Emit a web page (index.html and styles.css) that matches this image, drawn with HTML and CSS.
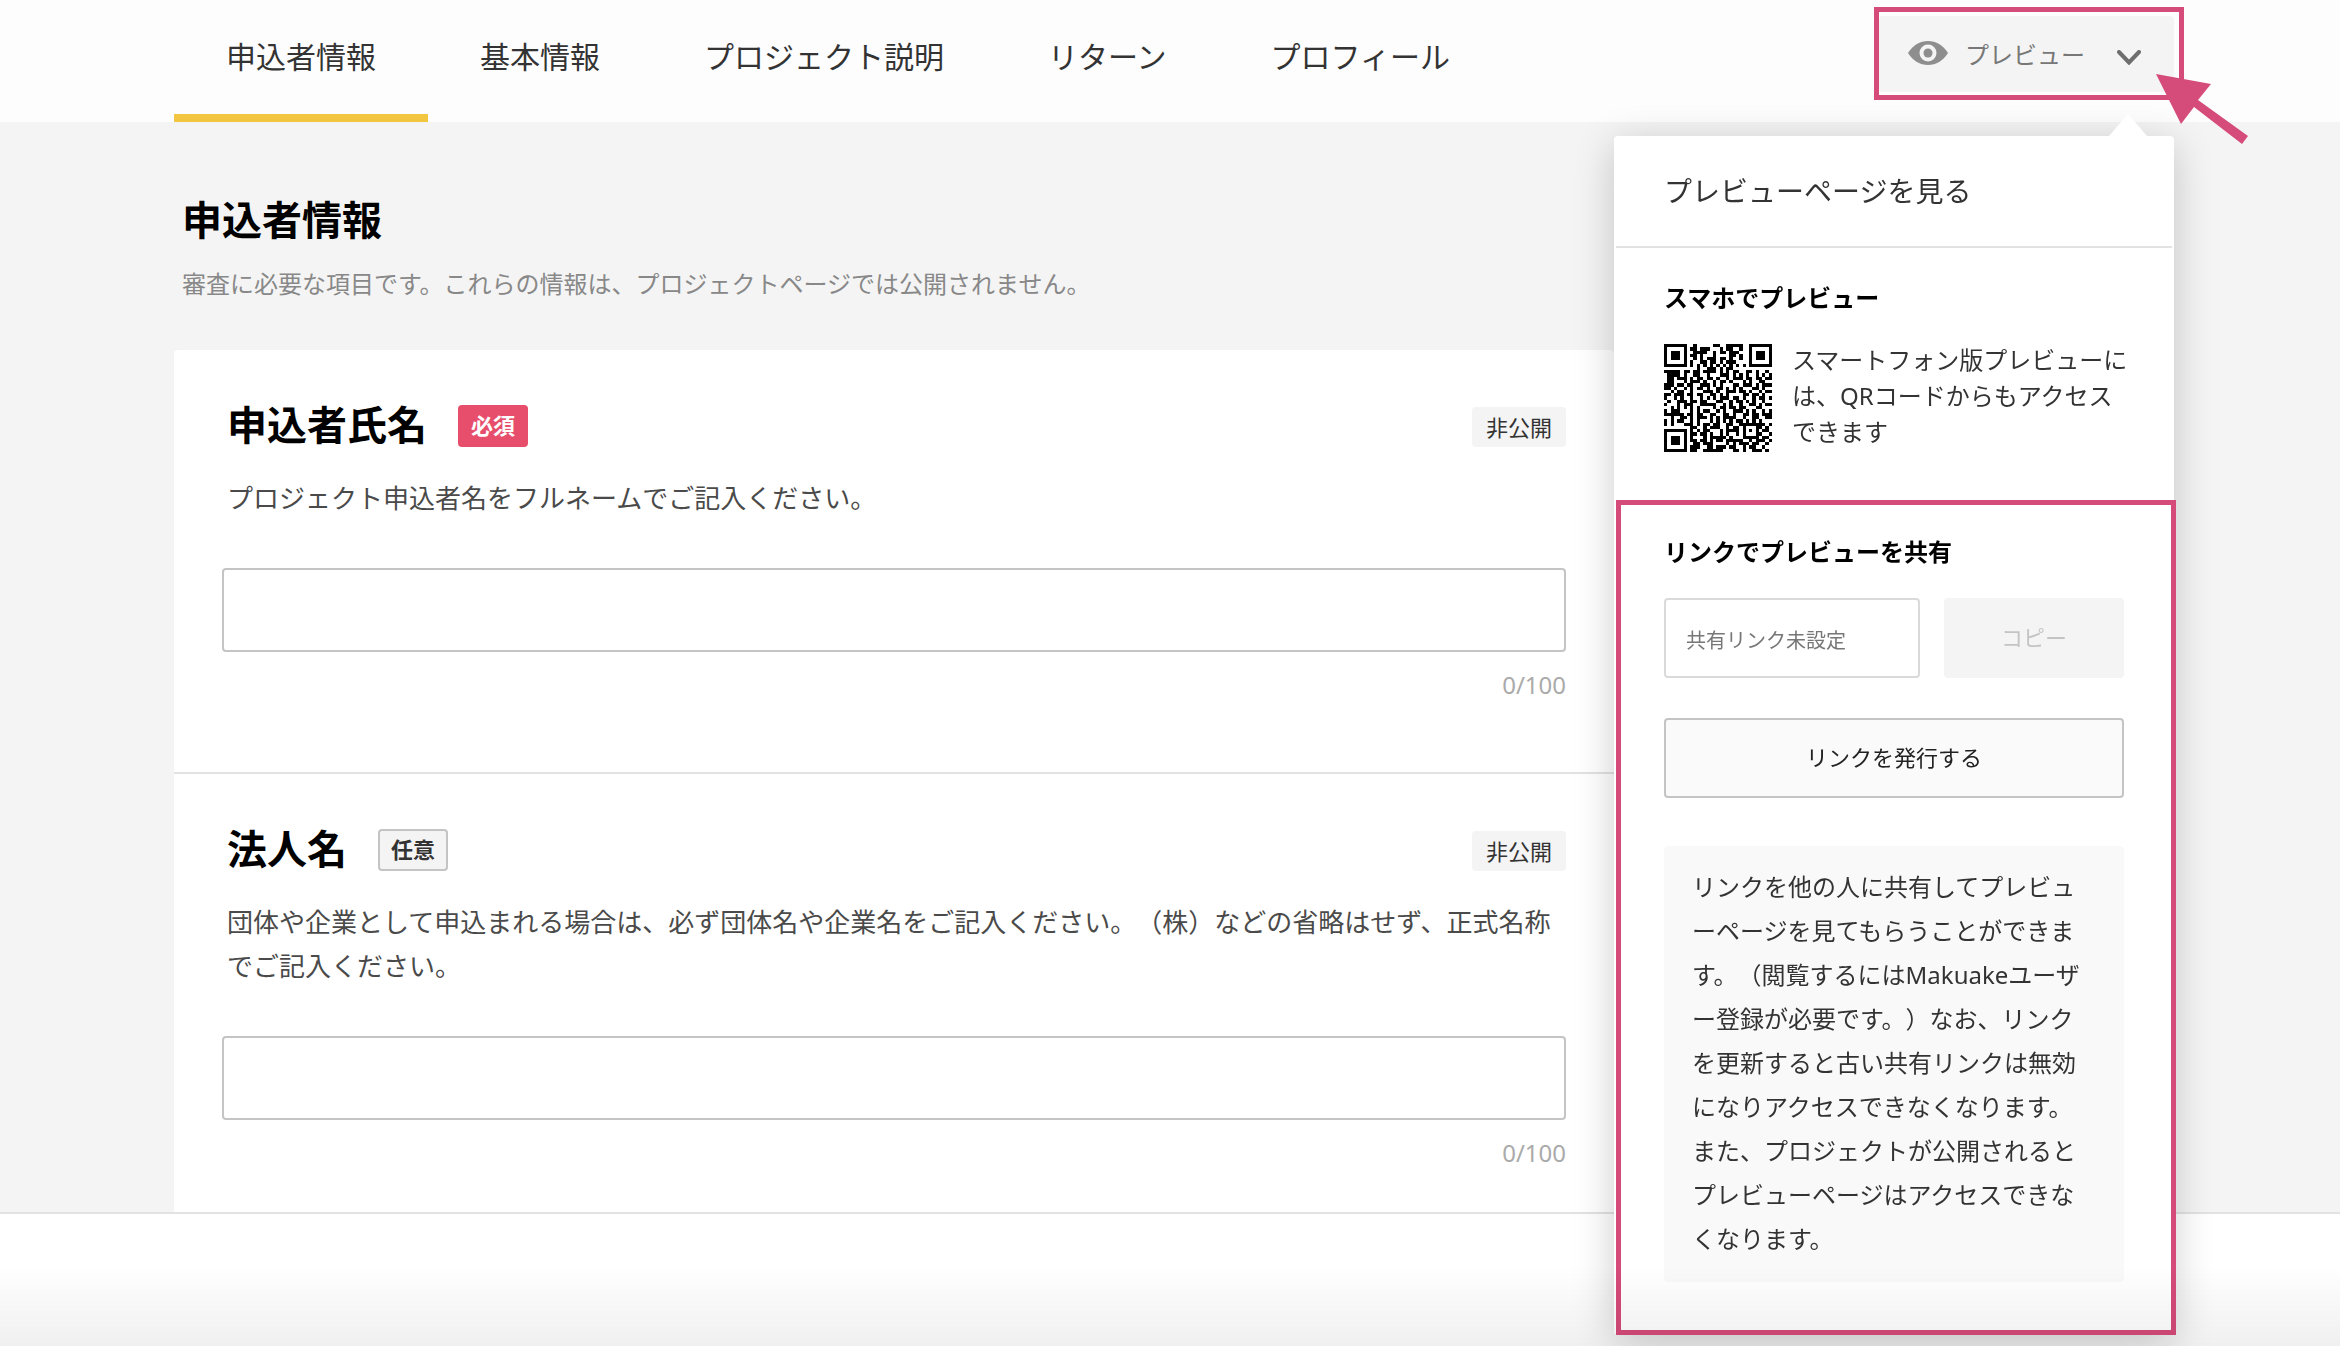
FILE: index.html
```html
<!DOCTYPE html>
<html lang="ja">
<head>
  <meta charset="utf-8">
  <meta name="viewport" content="width=device-width, initial-scale=1">
  <title>申込者情報</title>
  <link rel="stylesheet" href="styles.css">
</head>
<body>
  <header class="header">
    <nav class="tabs">
      <a class="tab tab-active" href="#applicant">申込者情報</a>
      <a class="tab" href="#basic">基本情報</a>
      <a class="tab" href="#project">プロジェクト説明</a>
      <a class="tab" href="#returns">リターン</a>
      <a class="tab" href="#profile">プロフィール</a>
    </nav>
    <div class="preview">
      <button class="preview-button" type="button" aria-expanded="true">
        <svg class="icon-eye" viewBox="0 0 40 24" aria-hidden="true">
          <path d="M0 12C5 4 12 0 20 0s15 4 20 12c-5 8-12 12-20 12S5 20 0 12z" fill="#8e8e8e"/>
          <circle cx="20" cy="12" r="8.5" fill="#f4f4f4"/>
          <circle cx="20" cy="12" r="4.5" fill="#8e8e8e"/>
        </svg>
        <span>プレビュー</span>
        <svg class="icon-chevron" viewBox="0 0 24 15" aria-hidden="true">
          <path d="M2 2l10 10.5L22 2" fill="none" stroke="#6e6e6e" stroke-width="4" stroke-linecap="round"/>
        </svg>
      </button>
      <span class="mark mark-button"></span>
      <svg class="mark-arrow" viewBox="0 0 92 70" aria-hidden="true">
        <path d="M0 0l55 10-13 16 50 36-6 8-48-37-13 17z" fill="#d54b79"/>
      </svg>

      <div class="panel">
        <a class="panel-link" href="#preview">プレビューページを見る</a>
        <section class="panel-phone">
          <h2 class="panel-title">スマホでプレビュー</h2>
          <div class="phone-row">
            <svg id="qr" class="qr" viewBox="0 0 33 33" shape-rendering="crispEdges" role="img" aria-label="QRコード"></svg>
            <p class="phone-text">スマートフォン版プレビューには、QRコードからもアクセスできます</p>
          </div>
        </section>
        <section class="panel-share">
          <h2 class="panel-title"><label for="share-link">リンクでプレビューを共有</label></h2>
          <div class="share-row">
            <input id="share-link" class="share-input" type="text" placeholder="共有リンク未設定" readonly>
            <button class="copy-button" type="button" disabled>コピー</button>
          </div>
          <button class="issue-button" type="button">リンクを発行する</button>
          <p class="note">リンクを他の人に共有してプレビューページを見てもらうことができます。（閲覧するにはMakuakeユーザー登録が必要です。）なお、リンクを更新すると古い共有リンクは無効になりアクセスできなくなります。また、プロジェクトが公開されるとプレビューページはアクセスできなくなります。</p>
        </section>
      </div>
    </div>
  </header>

  <main class="main" id="applicant">
    <h1 class="page-title">申込者情報</h1>
    <p class="page-lead">審査に必要な項目です。これらの情報は、プロジェクトページでは公開されません。</p>
    <form class="card">
      <div class="field">
        <div class="field-head">
          <label class="field-title" for="name">申込者氏名</label>
          <span class="badge badge-required">必須</span>
          <span class="tag">非公開</span>
        </div>
        <p class="field-text">プロジェクト申込者名をフルネームでご記入ください。</p>
        <input class="field-input" id="name" type="text" maxlength="100">
        <p class="counter">0/100</p>
      </div>
      <div class="field">
        <div class="field-head">
          <label class="field-title" for="company">法人名</label>
          <span class="badge badge-optional">任意</span>
          <span class="tag">非公開</span>
        </div>
        <p class="field-text">団体や企業として申込まれる場合は、必ず団体名や企業名をご記入ください。（株）などの省略はせず、正式名称でご記入ください。</p>
        <input class="field-input" id="company" type="text" maxlength="100">
        <p class="counter">0/100</p>
      </div>
    </form>
  </main>

  <footer class="footer"></footer>
  <div class="fade"></div>
  <script src="qr.js"></script>
</body>
</html>
```
FILE: styles.css
```css
* {
  box-sizing: border-box;
}

body {
  min-height: 100vh;
  margin: 0;
  background: #f4f4f4;
  color: #333;
  font-family: "Noto Sans", "Noto Sans CJK JP", sans-serif;
  font-size: 24px;
  line-height: 36px;
  line-break: loose;
  text-spacing-trim: space-all;
}

h1,
h2,
p {
  margin: 0;
}

button,
input {
  font-family: inherit;
  color: inherit;
}

.header {
  display: flex;
  justify-content: space-between;
  align-items: flex-start;
  padding: 0 166px 0 174px;
  background: #fdfdfd;
}

.tabs {
  display: flex;
}

.tab {
  padding: 35px 52px;
  border-bottom: 8px solid transparent;
  color: #333;
  font-size: 30px;
  line-height: 44px;
  text-decoration: none;
  white-space: nowrap;
}

.tab-active {
  border-bottom-color: #f2c641;
}

.preview {
  position: relative;
  z-index: 3;
  margin-top: 16px;
}

.preview-button {
  display: flex;
  align-items: center;
  height: 76px;
  padding: 0 33px 2px 29px;
  border: 0;
  border-radius: 4px;
  background: #f4f4f4;
  color: #777;
  font-size: 24px;
  white-space: nowrap;
}

.icon-eye {
  width: 40px;
  height: 24px;
  margin-right: 17px;
}

.icon-chevron {
  width: 24px;
  height: 15px;
  margin: 8px 0 0 32px;
}

.mark {
  position: absolute;
  border: 5px solid #d54b79;
  pointer-events: none;
}

.mark-button {
  inset: -9px -10px -8px -5px;
}

.mark-arrow {
  position: absolute;
  z-index: 2;
  top: 58px;
  right: -74px;
  width: 92px;
  height: 70px;
}

.panel {
  position: absolute;
  top: 120px;
  right: 0;
  width: 560px;
  border-radius: 4px;
  background: #fff;
  box-shadow: 0 8px 40px rgba(0, 0, 0, 0.2);
}

.panel::before {
  content: "";
  position: absolute;
  top: -22px;
  right: 27px;
  border: 19px solid transparent;
  border-top-width: 0;
  border-bottom: 22px solid #fff;
}

.panel-link {
  display: block;
  margin: 0 2px;
  padding: 33px 48px;
  border-bottom: 2px solid #e2e2e2;
  color: #333;
  font-size: 28px;
  line-height: 44px;
  text-decoration: none;
}

.panel-phone {
  padding: 32px 40px 48px 50px;
}

.panel-title {
  color: #000;
  font-size: 24px;
  font-weight: 700;
  line-height: 36px;
}

.phone-row {
  display: flex;
  gap: 20px;
  margin-top: 26px;
}

.qr {
  flex: none;
  width: 108px;
  height: 108px;
  margin-top: 2px;
}

.phone-text {
  flex: 1;
}

.panel-share {
  margin-right: -2px;
  margin-left: 2px;
  padding: 29px 47px 48px 43px;
  border: 5px solid #d54b79;
}

.share-row {
  display: flex;
  gap: 24px;
  margin-top: 28px;
}

.share-input {
  flex: 1;
  min-width: 0;
  height: 80px;
  padding: 4px 20px 0;
  border: 2px solid #dadada;
  border-radius: 4px;
  background: #fff;
  font-size: 20px;
}

.share-input::placeholder {
  color: #777;
  opacity: 1;
}

.copy-button {
  width: 180px;
  height: 80px;
  padding: 0 0 4px;
  border: 0;
  border-radius: 4px;
  background: #f4f4f4;
  color: #c4c4c4;
  font-size: 22px;
}

.issue-button {
  width: 100%;
  height: 80px;
  margin-top: 40px;
  padding: 0 0 4px;
  border: 2px solid #c4c4c4;
  border-radius: 4px;
  background: #fafafa;
  color: #222;
  font-size: 22px;
}

.note {
  margin-top: 48px;
  padding: 19px 28px 21px;
  border-radius: 4px;
  background: #f9f9f9;
  line-height: 44px;
}

.main {
  padding: 70px 166px 0 174px;
}

.page-title {
  padding-left: 8px;
  color: #000;
  font-size: 40px;
  font-weight: 700;
  line-height: 56px;
}

.page-lead {
  margin-top: 18px;
  padding-left: 8px;
  color: #888;
}

.card {
  max-width: 1440px;
  margin-top: 48px;
  border-radius: 4px;
  background: #fff;
}

.field {
  padding: 48px 48px 70px;
}

.field + .field {
  border-top: 2px solid #e2e2e2;
}

.field-head {
  display: flex;
  align-items: center;
  height: 56px;
  padding-left: 5px;
}

.field-title {
  padding-bottom: 2px;
  color: #000;
  font-size: 40px;
  font-weight: 700;
}

.badge {
  display: flex;
  align-items: center;
  justify-content: center;
  width: 70px;
  height: 42px;
  margin-left: 31px;
  padding-bottom: 2px;
  border-radius: 4px;
  font-size: 22px;
  font-weight: 700;
}

.badge-required {
  background: #e64e6c;
  color: #fff;
}

.badge-optional {
  border: 2px solid #c4c4c4;
  background: #f4f4f4;
}

.tag {
  margin-top: 2px;
  margin-left: auto;
  padding: 2px 14px;
  border-radius: 4px;
  background: #f4f4f4;
  font-size: 22px;
}

.field-text {
  margin-top: 22px;
  padding-left: 5px;
  color: #4a4a4a;
  font-size: 26px;
  line-height: 44px;
}

.field-input {
  display: block;
  width: 100%;
  height: 84px;
  margin-top: 48px;
  padding: 0 24px;
  border: 2px solid #c4c4c4;
  border-radius: 4px;
  background: #fff;
  font-size: 26px;
}

.counter {
  margin-top: 18px;
  padding-bottom: 2px;
  color: #aaa;
  line-height: 30px;
  text-align: right;
}

.footer {
  position: fixed;
  right: 0;
  bottom: 0;
  left: 0;
  z-index: 2;
  height: 134px;
  border-top: 2px solid #e2e2e2;
  background: #fff;
}

.fade {
  position: fixed;
  right: 0;
  bottom: 0;
  left: 0;
  z-index: 4;
  height: 80px;
  background: linear-gradient(rgba(0, 0, 0, 0), rgba(0, 0, 0, 0.06));
  pointer-events: none;
}
```
FILE: qr.js
```js
// One string per module row, "#" is a dark module.
const rows = [
  "#######..#.....##..#####..#######",
  "#.....#.##.###...#.##..#..#.....#",
  "#.###.#..####..#.##.###...#.###.#",
  "#.###.#.##.#...#....##.#..#.###.#",
  "#.###.#..#.#.###.##.#..#..#.###.#",
  "#.....#.#..##.##.#.###....#.....#",
  "#######.#.#.#.#.#.#.#.#.#.#######",
  "..........#..###.#.##............",
  "#####.##.##.####.#.#.##..##.#..#.",
  ".####.#..##..#...###.#.#.#..#.#.#",
  ".##.###.#.##.##.#..#.###.##.##.##",
  ".##...#.###.#..#.##.#...#.#..##..",
  "###.##.##..###.#.#...##.###.#.###",
  "##.#..#.#.##.#..##.#.#.#...##.#..",
  "..#.##..#...###.#..###.##.#..#.##",
  "##.###.##.##..##.#.#....##.##.#..",
  "#..#.#..#..#.#.#.###.##.#..#.##.#",
  ".#..###.##.##...##..#.##.#.#..#..",
  "#...#.###..#####..#.#..#..##.#.##",
  "..#.#.#.#.#....#.##.##.##...##...",
  "#.###...#.#.##..#.#..###.#.#..#.#",
  "######.##.##..##..##.#..##.##.###",
  "..#..##.#.###.#.#.####..#..##..##",
  "#.#.##..#.#...#.#.#.#.##.#.#.#...",
  "#.#...###.#.##.##..##..########.#",
  "........##..#.###..#.##.#...##.#.",
  "#######.#.#.##...#.####.#.#.#.##.",
  "#.....#.##.##.#..#.#..#.#...##..#",
  "#.###.#.#...#.#####.#...#####.##.",
  "#.###.#.##.##.#.##.#####..#.###.#",
  "#.###.#..##.###....#.#.###.##..#.",
  "#.....#.###..##.###.##..#.##..#..",
  "#######.##..######...##.#..###.#."
];

const path = document.createElementNS("http://www.w3.org/2000/svg", "path");
let d = "";
rows.forEach((row, y) => {
  [...row].forEach((cell, x) => {
    if (cell === "#") d += `M${x} ${y}h1v1h-1z`;
  });
});
path.setAttribute("d", d);
document.getElementById("qr").append(path);
```
